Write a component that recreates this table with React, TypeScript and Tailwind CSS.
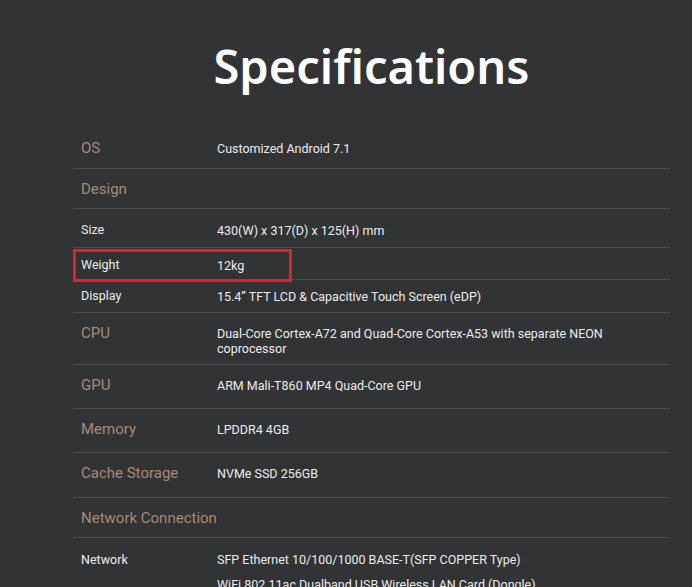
import React from "react";

type Row = {
  label: string;
  values?: string[];
  cat?: boolean;
  h: string;
  highlight?: boolean;
};

const rows: Row[] = [
  { label: "OS", values: ["Customized Android 7.1"], cat: true, h: "h-[45px] pt-[4px]" },
  { label: "Design", cat: true, h: "h-[40px] pt-[2px]" },
  { label: "Size", values: ["430(W) x 317(D) x 125(H) mm"], h: "h-[39px] pt-[4px]" },
  { label: "Weight", values: ["12kg"], h: "h-[32px] pt-[3px]", highlight: true },
  { label: "Display", values: ["15.4\u201D TFT LCD & Capacitive Touch Screen (eDP)"], h: "h-[33px]" },
  { label: "GPU", values: ["ARM Mali-T860 MP4 Quad-Core GPU"], cat: true, h: "h-[44px] pb-[2px]" },
  { label: "Memory", values: ["LPDDR4 4GB"], cat: true, h: "h-[44px] pb-[2px]" },
  { label: "Cache Storage", values: ["NVMe SSD 256GB"], cat: true, h: "h-[45px] pb-[3px]" },
  { label: "Network Connection", cat: true, h: "h-[40px] pt-[2px]" },
];

function RowView({ r }: { r: Row }) {
  return (
    <div className={`relative flex items-center border-b border-[#4a4b4e] ${r.h}`}>
      <div
        className={`w-[144px] shrink-0 pl-2 ${
          r.cat ? "text-[15px] text-[#a88a77]" : "text-[12.5px] text-[#ececec]"
        }`}
      >
        {r.label}
      </div>
      {r.values && (
        <div className="pr-16 text-[12.5px] leading-[15px] text-[#ececec]">
          {r.values.map((v) => (
            <div key={v}>{v}</div>
          ))}
        </div>
      )}
      {r.highlight && (
        <div className="absolute left-0 top-[1px] w-[219px] h-[33px] border-[3px] border-[#e0232a]" />
      )}
    </div>
  );
}

export default function App() {
  return (
    <div className="w-[692px] h-[587px] overflow-hidden bg-[#323335] font-['Roboto',sans-serif]">
      <div className="w-[597px] ml-[73px]">
        <h1 className="h-[124px] pt-[36px] text-center text-[47px] leading-[60px] font-semibold text-white font-['Noto_Sans',sans-serif]">
          Specifications
        </h1>
        {rows.slice(0, 5).map((r) => (
          <RowView key={r.label} r={r} />
        ))}
        <div className="flex items-start h-[52px] pt-[13px] border-b border-[#4a4b4e]">
          <div className="w-[144px] shrink-0 pl-2 text-[15px] leading-[15px] text-[#a88a77]">CPU</div>
          <div className="pr-16 text-[12.5px] leading-[15px] text-[#ececec]">
            Dual-Core Cortex-A72 and Quad-Core Cortex-A53 with separate NEON coprocessor
          </div>
        </div>
        {rows.slice(5).map((r) => (
          <RowView key={r.label} r={r} />
        ))}
        <div className="flex pt-[14px]">
          <div className="w-[144px] shrink-0 pl-2 text-[12.5px] leading-[15px] text-[#ececec]">Network</div>
          <div className="flex flex-col gap-[10px] text-[12.5px] leading-[15px] text-[#ececec]">
            <div>SFP Ethernet 10/100/1000 BASE-T(SFP COPPER Type)</div>
            <div>WiFi 802.11ac Dualband USB Wireless LAN Card (Dongle)</div>
          </div>
        </div>
      </div>
    </div>
  );
}
